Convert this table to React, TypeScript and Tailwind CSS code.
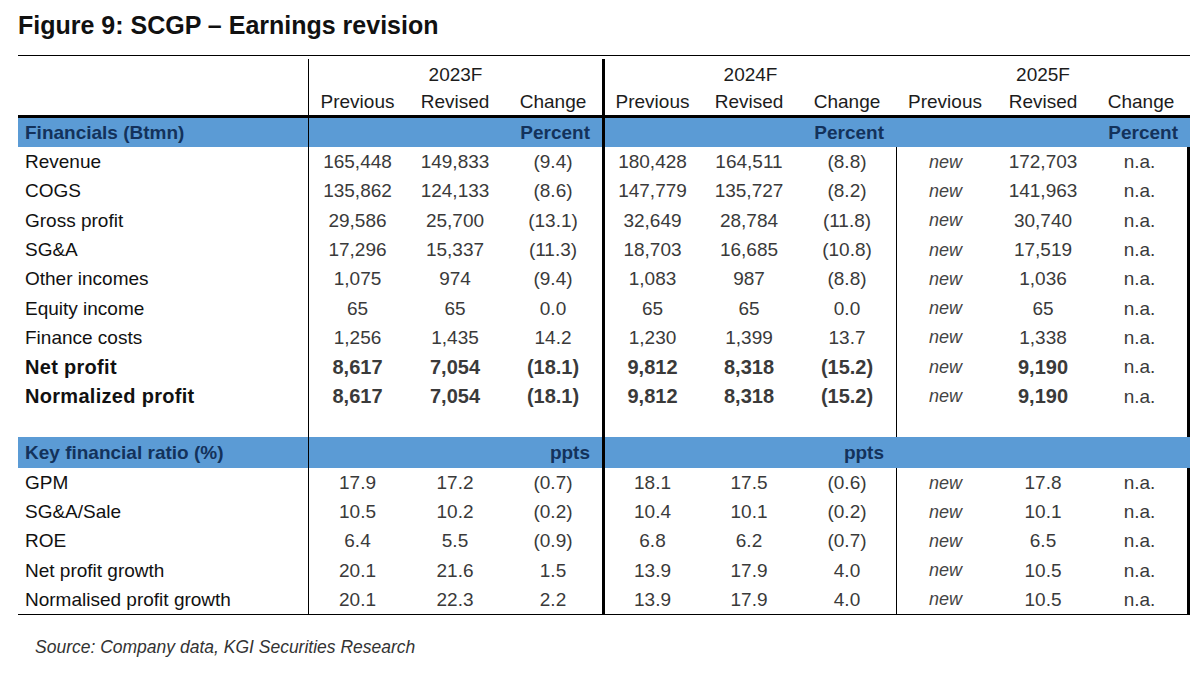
import React from "react";

type RowData = { label: string; v: string[]; bold?: boolean };

const fin: RowData[] = [
  { label: "Revenue", v: ["165,448", "149,833", "(9.4)", "180,428", "164,511", "(8.8)", "new", "172,703", "n.a."] },
  { label: "COGS", v: ["135,862", "124,133", "(8.6)", "147,779", "135,727", "(8.2)", "new", "141,963", "n.a."] },
  { label: "Gross profit", v: ["29,586", "25,700", "(13.1)", "32,649", "28,784", "(11.8)", "new", "30,740", "n.a."] },
  { label: "SG&A", v: ["17,296", "15,337", "(11.3)", "18,703", "16,685", "(10.8)", "new", "17,519", "n.a."] },
  { label: "Other incomes", v: ["1,075", "974", "(9.4)", "1,083", "987", "(8.8)", "new", "1,036", "n.a."] },
  { label: "Equity income", v: ["65", "65", "0.0", "65", "65", "0.0", "new", "65", "n.a."] },
  { label: "Finance costs", v: ["1,256", "1,435", "14.2", "1,230", "1,399", "13.7", "new", "1,338", "n.a."] },
  { label: "Net profit", v: ["8,617", "7,054", "(18.1)", "9,812", "8,318", "(15.2)", "new", "9,190", "n.a."], bold: true },
  { label: "Normalized profit", v: ["8,617", "7,054", "(18.1)", "9,812", "8,318", "(15.2)", "new", "9,190", "n.a."], bold: true },
];

const ratios: RowData[] = [
  { label: "GPM", v: ["17.9", "17.2", "(0.7)", "18.1", "17.5", "(0.6)", "new", "17.8", "n.a."] },
  { label: "SG&A/Sale", v: ["10.5", "10.2", "(0.2)", "10.4", "10.1", "(0.2)", "new", "10.1", "n.a."] },
  { label: "ROE", v: ["6.4", "5.5", "(0.9)", "6.8", "6.2", "(0.7)", "new", "6.5", "n.a."] },
  { label: "Net profit growth", v: ["20.1", "21.6", "1.5", "13.9", "17.9", "4.0", "new", "10.5", "n.a."] },
  { label: "Normalised profit growth", v: ["20.1", "22.3", "2.2", "13.9", "17.9", "4.0", "new", "10.5", "n.a."] },
];

const GRID = "grid grid-cols-[290px_repeat(9,98px)]";

function dataBorder(i: number): string {
  if (i === 0) return "border-l border-black";
  if (i === 3) return "border-l-[3px] border-black";
  if (i === 6) return "border-l border-black";
  if (i === 8) return "border-r-[3px] border-black";
  return "";
}

function bandBorder(i: number): string {
  if (i === 0) return "border-l border-black";
  if (i === 3) return "border-l-[3px] border-black";
  return "";
}

function DataRow({ row, h }: { row: RowData; h: string }) {
  return (
    <div className={`${GRID} ${h}`}>
      <div
        className={`flex items-center pl-[7px] text-[#111] ${
          row.bold ? "font-bold text-[20px] tracking-[0.3px]" : ""
        }`}
      >
        {row.label}
      </div>
      {row.v.map((x, i) => {
        const isNew = x === "new";
        const isNa = x === "n.a.";
        return (
          <div
            key={i}
            className={`flex items-center justify-center ${dataBorder(i)} ${
              isNew ? "italic text-[#444] text-[18px]" : "text-[#3a3a3a]"
            } ${row.bold && !isNew && !isNa ? "font-bold text-[#1a1a1a] text-[20px]" : ""}`}
          >
            {x}
          </div>
        );
      })}
    </div>
  );
}

function EmptyRow({ h }: { h: string }) {
  return (
    <div className={`${GRID} ${h}`}>
      <div />
      {Array.from({ length: 9 }).map((_, i) => (
        <div key={i} className={dataBorder(i)} />
      ))}
    </div>
  );
}

function Band({ label, unit, full, h }: { label: string; unit: string; full: boolean; h: string }) {
  return (
    <div className={`${GRID} ${h} bg-[#5b9bd5] text-[#13325b] font-bold`}>
      <div className="flex items-center pl-[7px]">{label}</div>
      {Array.from({ length: 9 }).map((_, i) => {
        const show = i === 2 || i === 5 || (full && i === 8);
        return (
          <div key={i} className={`flex items-center justify-end pr-[12px] ${bandBorder(i)}`}>
            {show ? unit : ""}
          </div>
        );
      })}
    </div>
  );
}

export default function App() {
  const sub = ["Previous", "Revised", "Change"];
  return (
    <div className="w-[1200px] h-[673px] bg-white font-['Liberation_Sans',Arial,sans-serif] text-[19px] leading-none overflow-hidden">
      <div className="pl-[18px] pt-[12px] h-[55px]">
        <h1 className="text-[25px] font-bold text-[#111] leading-[26px]">
          Figure 9: SCGP – Earnings revision
        </h1>
      </div>
      <div className="ml-[18px] w-[1172px]">
        <div className="h-px bg-black" />
        <div className="h-[3px]" />
        <div className={`${GRID} h-[28px] text-[#1c1c1c]`}>
          <div />
          <div className="col-span-3 flex items-end justify-center pb-[3px] border-l border-black">2023F</div>
          <div className="col-span-3 flex items-end justify-center pb-[3px] border-l-[3px] border-black">2024F</div>
          <div className="col-span-3 flex items-end justify-center pb-[3px]">2025F</div>
        </div>
        <div className={`${GRID} h-[28px] text-[#1c1c1c]`}>
          <div />
          {Array.from({ length: 9 }).map((_, i) => (
            <div
              key={i}
              className={`flex items-center justify-center ${
                i === 0 ? "border-l border-black" : i === 3 ? "border-l-[3px] border-black" : ""
              }`}
            >
              {sub[i % 3]}
            </div>
          ))}
        </div>
        <div className="h-[3px] bg-black" />
        <Band label="Financials (Btmn)" unit="Percent" full h="h-[29px]" />
        {fin.map((r) => (
          <DataRow key={r.label} row={r} h="h-[29.3px]" />
        ))}
        <EmptyRow h="h-[26.3px]" />
        <Band label="Key financial ratio (%)" unit="ppts" full={false} h="h-[31px]" />
        {ratios.map((r) => (
          <DataRow key={r.label} row={r} h="h-[29.2px]" />
        ))}
        <div className="h-px bg-black" />
      </div>
      <div className="pl-[35px] pt-[24px] italic text-[17.5px] text-[#333]">
        Source: Company data, KGI Securities Research
      </div>
    </div>
  );
}
